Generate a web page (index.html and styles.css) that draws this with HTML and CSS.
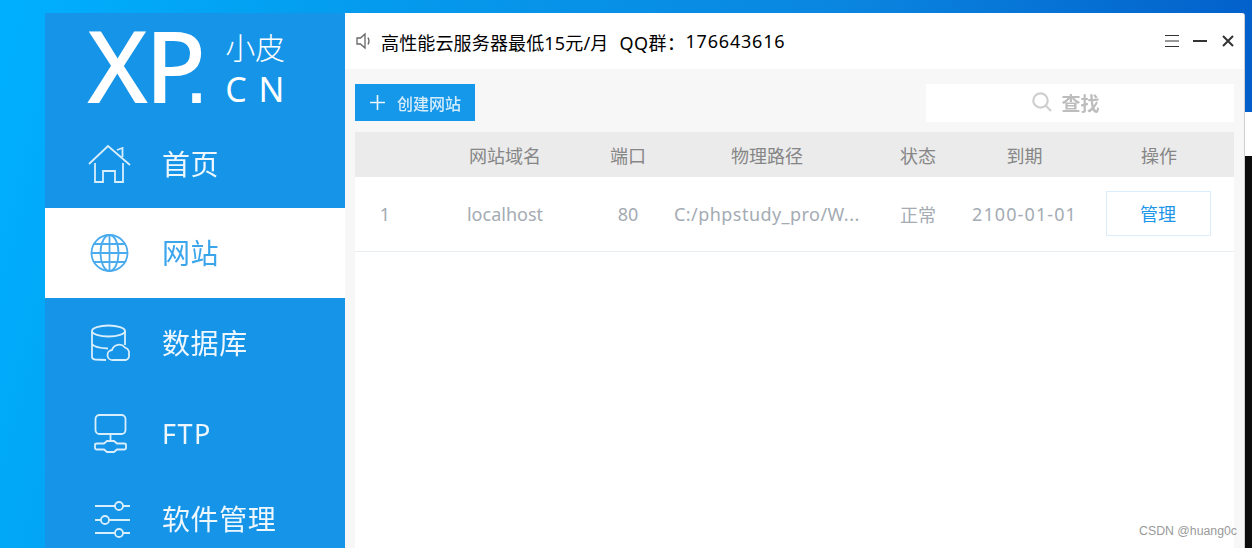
FILE: index.html
```html
<!DOCTYPE html>
<html lang="en">
  <head>
    <meta charset="UTF-8" />
    <title>phpstudy</title>
    <link rel="stylesheet" href="styles.css">
  </head>
  <body>
    <div class="desktop">
      <div class="behind">
        <div class="behind-white"></div>
        <div class="behind-black"></div>
      </div>

      <div class="window">
        <aside class="sidebar">
          <div class="logo">
            <div class="logo-xp">X<span class="logo-p">P</span><span class="logo-dot">.</span></div>
            <div class="logo-side">
              <div class="logo-cn">小皮</div>
              <div class="logo-en">CN</div>
            </div>
          </div>
          <nav>
            <a class="nav-item">
              <svg class="nav-icon" viewBox="0 0 44 44"><path d="M1 22 20 4 42 23M29 8l5.500-2v9M7 21v19h8V29h12v11h8V21"/></svg>
              <span>首页</span>
            </a>
            <a class="nav-item active">
              <svg class="nav-icon" viewBox="0 0 44 44"><circle cx="21.500" cy="22" r="18"/><ellipse cx="21.500" cy="22" rx="9" ry="18"/><path d="M21.500 4v36M3.500 22h36M6 13h31M6 31h31"/></svg>
              <span>网站</span>
            </a>
            <a class="nav-item">
              <svg class="nav-icon" viewBox="0 0 44 44"><ellipse cx="20.500" cy="10" rx="16.500" ry="5.500"/><path d="M4 10v26q0 2 3 2.500l11 .5M37 10v14M4 23q3 4 16 4.500M25 39a5 5 0 0 1-1-10 7.500 7.500 0 0 1 13-2.500 6.500 6.500 0 0 1 4 7 5 5 0 0 1-3 5.500z"/></svg>
              <span>数据库</span>
            </a>
            <a class="nav-item">
              <svg class="nav-icon" viewBox="0 0 44 44"><rect x="7.500" y="4" width="30" height="19" rx="4"/><path d="M22.500 23v7M16 32.500l3-2.500h7l3 2.500h7q2 0 2 1.500v3q0 1.500-2 1.500h-7l-3 2.500h-7l-3-2.500H9q-2 0-2-1.500v-3q0-1.500 2-1.500z"/></svg>
              <span class="nav-latin">FTP</span>
            </a>
            <a class="nav-item">
              <svg class="nav-icon" viewBox="0 0 44 44"><path d="M7 9h20M35 9h7M7 23h6M21 23h21M7 36h20M35 36h7"/><circle cx="31" cy="9" r="4"/><circle cx="17" cy="23" r="4"/><circle cx="31" cy="36" r="4"/></svg>
              <span>软件管理</span>
            </a>
          </nav>
        </aside>

        <main class="main">
          <header class="topbar">
            <svg class="speaker" viewBox="0 0 16 18"><path d="M1 6h3.500L9 2v14l-4.500-4H1zM12 5.500q2 3.500 0 7"/></svg>
            <div class="notice">
              <span class="notice-ad">高性能云服务器最低15元/月</span>
              <span class="notice-qq">QQ群：</span><span class="notice-num">176643616</span>
            </div>
            <div class="win-btns">
              <svg viewBox="0 0 14 14" class="win-menu"><path d="M0 1.500h14M0 7h14M0 12.500h14"/></svg>
              <svg viewBox="0 0 14 14" class="win-min"><path d="M0 7h14"/></svg>
              <svg viewBox="0 0 12 12" class="win-close"><path d="M1 1l10 10M11 1 1 11"/></svg>
            </div>
          </header>

          <div class="panel">
            <div class="toolbar">
              <button class="create-btn">
                <svg viewBox="0 0 15 15"><path d="M7.500 0v15M0 7.500h15"/></svg>
                <span>创建网站</span>
              </button>
              <div class="search">
                <svg viewBox="0 0 20 20"><circle cx="8.500" cy="8.500" r="7.200"/><path d="M13.800 13.800 19 19"/></svg>
                <span>查找</span>
              </div>
            </div>

            <div class="table-wrap">
              <table class="sites">
                <colgroup>
                  <col class="c-id"><col class="c-domain"><col class="c-port"><col class="c-path"><col class="c-state"><col class="c-date"><col class="c-op">
                </colgroup>
                <thead>
                  <tr><th></th><th>网站域名</th><th>端口</th><th>物理路径</th><th>状态</th><th>到期</th><th class="op">操作</th></tr>
                </thead>
                <tbody>
                  <tr>
                    <td>1</td>
                    <td>localhost</td>
                    <td>80</td>
                    <td class="path">C:/phpstudy_pro/W...</td>
                    <td>正常</td>
                    <td class="date">2100-01-01</td>
                    <td class="op-cell"><button class="manage-btn">管理</button></td>
                  </tr>
                </tbody>
              </table>
            </div>
          </div>
        </main>
      </div>

      <div class="watermark">CSDN @huang0c</div>
    </div>
  </body>
</html>
```
FILE: styles.css
```css
* {
  margin: 0;
  padding: 0;
  box-sizing: border-box;
}

html,
body {
  height: 100%;
  overflow: hidden;
}

body {
  font-family: "Noto Sans", "Noto Sans CJK SC", sans-serif;
}

.desktop {
  position: relative;
  width: 100%;
  height: 548px;
  overflow: hidden;
  background: linear-gradient(105deg, #00b0ff 0%, #049cee 25%, #0a86e0 60%, #0054c4 100%);
}

/* another window showing behind, right edge */
.behind {
  position: absolute;
  top: 112px;
  right: 0;
  bottom: 0;
  width: 7px;
  display: flex;
  flex-direction: column;
}

.behind-white {
  height: 44px;
  background: #fff;
}

.behind-black {
  flex: 1;
  background: #0c0c0c;
}

.window {
  position: absolute;
  top: 13px;
  left: 45px;
  width: 1200px;
  height: 535px;
  display: flex;
}

/* sidebar */
.sidebar {
  width: 300px;
  flex-shrink: 0;
  background: #1594e8;
  color: #fff;
}

.logo {
  height: 106px;
  padding-left: 42px;
  display: flex;
  gap: 19px;
  color: #fff;
}

.logo-xp {
  font-size: 100px;
  line-height: 100px;
  margin-top: 1px;
  font-weight: 500;
  letter-spacing: -3px;
  white-space: nowrap;
}

.logo-p {
  letter-spacing: -22px;
}

.logo-dot {
  font-family: "Liberation Sans", sans-serif;
  font-size: 90px;
  font-weight: 400;
}

.logo-side {
  padding-top: 13px;
}

.logo-cn {
  font-family: "Noto Sans CJK SC", sans-serif;
  font-size: 30px;
  line-height: 40px;
  font-weight: 300;
}

.logo-en {
  font-size: 34px;
  line-height: 40px;
  letter-spacing: 12px;
  margin-top: 3px;
}

.nav-item {
  height: 90px;
  padding-left: 43px;
  display: flex;
  align-items: center;
  gap: 30px;
  font-size: 28px;
  letter-spacing: 0.6px;
  color: #eef7fe;
  font-family: "Noto Sans CJK SC", sans-serif;
}

.nav-item span {
  filter: blur(0.3px);
  margin-bottom: 2px;
}

.nav-item:first-child {
  height: 89px;
}

.nav-item:last-child {
  height: 82px;
}

.nav-item.active {
  background: #fff;
  color: #3ba5ec;
}

.nav-item .nav-latin {
  font-family: "Noto Sans", sans-serif;
  font-size: 27px;
  letter-spacing: 1.500px;
  margin-bottom: 0;
}

.nav-icon {
  width: 44px;
  height: 44px;
  fill: none;
  stroke: #d8eefc;
  stroke-width: 1.800;
}

.nav-item.active .nav-icon {
  stroke: #4aabee;
}

/* main area */
.main {
  flex: 1;
  display: flex;
  flex-direction: column;
  background: #fff;
  border-right: 1px solid #d0d0d0;
  border-top-right-radius: 3px;
}

.topbar {
  height: 56px;
  padding-left: 11px;
  display: flex;
  align-items: center;
  flex-shrink: 0;
}

.speaker {
  width: 16px;
  height: 18px;
  fill: none;
  stroke: #666;
  stroke-width: 1.300;
  margin-right: 9px;
}

.notice {
  font-size: 18px;
  color: #000;
  flex: 1;
  display: flex;
  white-space: nowrap;
  margin-top: 2px;
}

.notice-ad {
  letter-spacing: 0.15px;
  margin-right: 11px;
}

.notice-qq {
  letter-spacing: 0.5px;
}

.notice-num {
  letter-spacing: 0.8px;
}

.win-btns {
  display: flex;
  align-items: center;
  padding-right: 10px;
}

.win-btns svg {
  fill: none;
  stroke: #333;
}

.win-menu {
  width: 14px;
  height: 14px;
  stroke-width: 1.200;
  margin-right: 14px;
}

.win-min {
  width: 14px;
  height: 14px;
  stroke-width: 2;
  margin-right: 15px;
}

.win-close {
  width: 12px;
  height: 12px;
  stroke-width: 2;
}

.panel {
  flex: 1;
  background: #f7f7f7;
  padding: 15px 10px 0 10px;
  display: flex;
  flex-direction: column;
}

.toolbar {
  display: flex;
  justify-content: space-between;
  align-items: flex-start;
  height: 48px;
  flex-shrink: 0;
}

.create-btn {
  width: 120px;
  height: 37px;
  border: none;
  background: #1698ea;
  color: #d5ecfb;
  display: flex;
  align-items: center;
  padding-left: 15px;
  gap: 12px;
  font-family: "Noto Sans CJK SC", sans-serif;
  font-size: 16px;
  font-weight: 500;
}

.create-btn span {
  filter: blur(0.6px);
}

.create-btn svg {
  width: 15px;
  height: 15px;
  stroke: #eef7fe;
  stroke-width: 1.600;
  fill: none;
}

.search {
  width: 308px;
  height: 38px;
  background: #fff;
  display: flex;
  align-items: center;
  justify-content: center;
  gap: 9px;
  padding: 0 28px 2px 0;
  color: #bdbdbd;
  font-family: "Noto Sans CJK SC", sans-serif;
  font-size: 19px;
  font-weight: 700;
}

.search span {
  filter: blur(0.5px);
}

.search svg {
  width: 20px;
  height: 20px;
  fill: none;
  stroke: #cfcfcf;
  stroke-width: 2.200;
}

/* table */
.table-wrap {
  flex: 1;
  background: #fff;
}

.sites {
  width: 100%;
  border-collapse: collapse;
  table-layout: fixed;
  font-size: 18px;
}

.c-id { width: 60px; }
.c-domain { width: 180px; }
.c-port { width: 66px; }
.c-path { width: 212px; }
.c-state { width: 90px; }
.c-date { width: 123px; }
.c-op { width: 148px; }

.sites th {
  height: 45px;
  background: #ebebeb;
  color: #868686;
  font-weight: 400;
  text-align: center;
  font-family: "Noto Sans CJK SC", sans-serif;
}

.sites th.op {
  padding-right: 2px;
}

.sites td {
  height: 74px;
  text-align: center;
  color: #a4abb3;
  border-bottom: 1px solid #e9eef2;
  white-space: nowrap;
}

.sites td.op-cell {
  padding-right: 4px;
}

.sites td.path {
  padding-left: 13px;
  letter-spacing: 0.45px;
  text-align: left;
}

.sites td.date {
  letter-spacing: 1.100px;
}

.manage-btn {
  display: block;
  margin: 0 auto 1px;
  width: 105px;
  height: 45px;
  background: #fff;
  border: 1px solid #dcedfb;
  color: #1e96e8;
  font-family: "Noto Sans CJK SC", sans-serif;
  font-size: 18px;
}

.watermark {
  position: absolute;
  right: 15px;
  bottom: 10px;
  font-family: "Liberation Sans", sans-serif;
  font-size: 12.300px;
  color: #9a9a9a;
}
```
